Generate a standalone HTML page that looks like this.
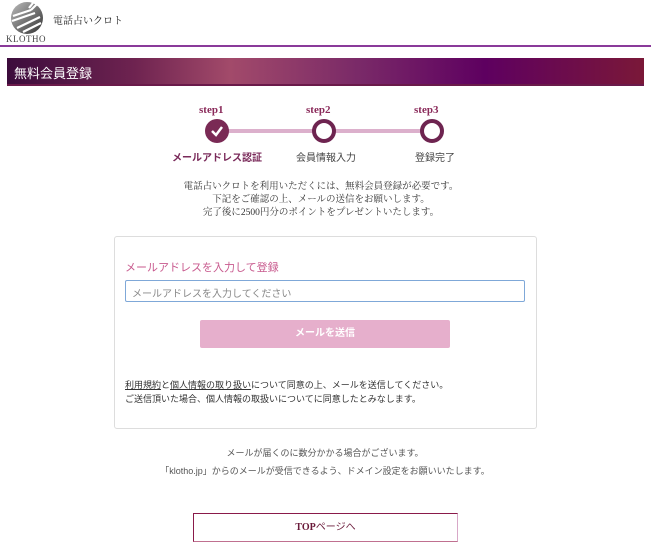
<!DOCTYPE html>
<html><head><meta charset="utf-8"><style>
*{margin:0;padding:0;box-sizing:border-box}
body{width:656px;height:548px;background:#fff;font-family:"Liberation Sans","Noto Sans CJK JP",sans-serif;position:relative;overflow:hidden;color:#333}
.a{position:absolute}
.serif{font-family:"Liberation Serif","Noto Serif CJK SC",serif}
.c{text-align:center;width:100%}
</style></head><body>
<svg class="a" style="left:9px;top:1px" width="36" height="34" viewBox="0 0 36 34">
<defs><linearGradient id="g" x1="0" y1="0" x2="1" y2="1"><stop offset="0" stop-color="#bbb"/><stop offset="1" stop-color="#333"/></linearGradient></defs>
<circle cx="18" cy="17" r="16" fill="url(#g)"/>
<path d="M4 15 L22 9 M3 20 L26 12 M8 27 L31 16 M14 31 L32 22 M20 7 L24 2 M22 9 L28 3" stroke="#fff" stroke-width="2.2" fill="none"/>
</svg>
<div class="a serif" style="left:6px;top:34px;font-size:9px;letter-spacing:0.5px;color:#444">KLOTHO</div>
<div class="a serif" style="left:53px;top:12px;font-size:10px;color:#222">電話占いクロト</div>
<div class="a" style="left:0;top:45px;width:651px;height:2px;background:#8a3a9a"></div>
<div class="a" style="left:7px;top:58px;width:637px;height:26px;background:linear-gradient(90deg,#3c0c3c 0%,#6e2350 20%,#a24a6a 35%,#7a2a68 55%,#5e0060 75%,#7a1838 100%)"></div>
<div class="a" style="left:7px;top:84px;width:637px;height:2px;background:#6a1a4a"></div>
<div class="a" style="left:14px;top:63px;font-size:13px;color:#fff">無料会員登録</div>
<div class="a" style="left:217px;top:129px;width:215px;height:4px;background:#dcb0cc"></div>
<div class="a" style="left:205px;top:119px;width:24px;height:24px;border-radius:50%;background:#7a2a55"></div>
<svg class="a" style="left:209px;top:123px" width="16" height="16"><path d="M3 8 L7 12 L13 4" stroke="#fff" stroke-width="2.5" fill="none"/></svg>
<div class="a" style="left:312px;top:119px;width:24px;height:24px;border-radius:50%;border:4px solid #6e2450;background:#fff"></div>
<div class="a" style="left:420px;top:119px;width:24px;height:24px;border-radius:50%;border:4px solid #6e2450;background:#fff"></div>
<div class="a serif" style="left:199px;top:104px;font-size:11px;color:#8a2a5a;font-weight:bold">step1</div>
<div class="a serif" style="left:306px;top:104px;font-size:11px;color:#8a2a5a;font-weight:bold">step2</div>
<div class="a serif" style="left:414px;top:104px;font-size:11px;color:#8a2a5a;font-weight:bold">step3</div>
<div class="a" style="left:172px;top:149px;font-size:10px;color:#7a2a5a;font-weight:bold">メールアドレス認証</div>
<div class="a" style="left:296px;top:149px;font-size:10px;color:#444">会員情報入力</div>
<div class="a" style="left:415px;top:149px;font-size:10px;color:#444">登録完了</div>
<div class="a serif c" style="left:0;top:181px;font-size:9.5px;line-height:13px;color:#333;width:642px">電話占いクロトを利用いただくには、無料会員登録が必要です。<br>下記をご確認の上、メールの送信をお願いします。<br>完了後に2500円分のポイントをプレゼントいたします。</div>
<div class="a" style="left:114px;top:236px;width:423px;height:193px;border:1px solid #ddd;border-radius:3px"></div>
<div class="a" style="left:125px;top:259px;font-size:11px;color:#c85a8e">メールアドレスを入力して登録</div>
<div class="a" style="left:125px;top:280px;width:400px;height:22px;border:1px solid #7fa8d8;border-radius:2px;font-size:10px;color:#888;padding:4px 6px">メールアドレスを入力してください</div>
<div class="a" style="left:200px;top:320px;width:250px;height:28px;background:#e6afcc;border-radius:2px;color:#fff;font-size:10px;text-align:center;line-height:28px;font-weight:bold">メールを送信</div>
<div class="a" style="left:125px;top:378px;font-size:9px;line-height:14px;color:#333"><u>利用規約</u>と<u>個人情報の取り扱い</u>について同意の上、メールを送信してください。<br>ご送信頂いた場合、個人情報の取扱いについてに同意したとみなします。</div>
<div class="a c" style="left:0;top:446px;font-size:9px;color:#555;width:650px">メールが届くのに数分かかる場合がございます。</div>
<div class="a c" style="left:0;top:464px;font-size:9px;color:#555;width:650px">「klotho.jp」からのメールが受信できるよう、ドメイン設定をお願いいたします。</div>
<div class="a" style="left:193px;top:513px;width:265px;height:29px;border:1px solid #8a1a4a;border-right-color:#d8a8c8;border-bottom-color:#c07090;text-align:center;line-height:27px;font-size:10px;color:#6a1a3a"><span class="serif" style="font-weight:bold">TOP</span>ページへ</div>
</body></html>
